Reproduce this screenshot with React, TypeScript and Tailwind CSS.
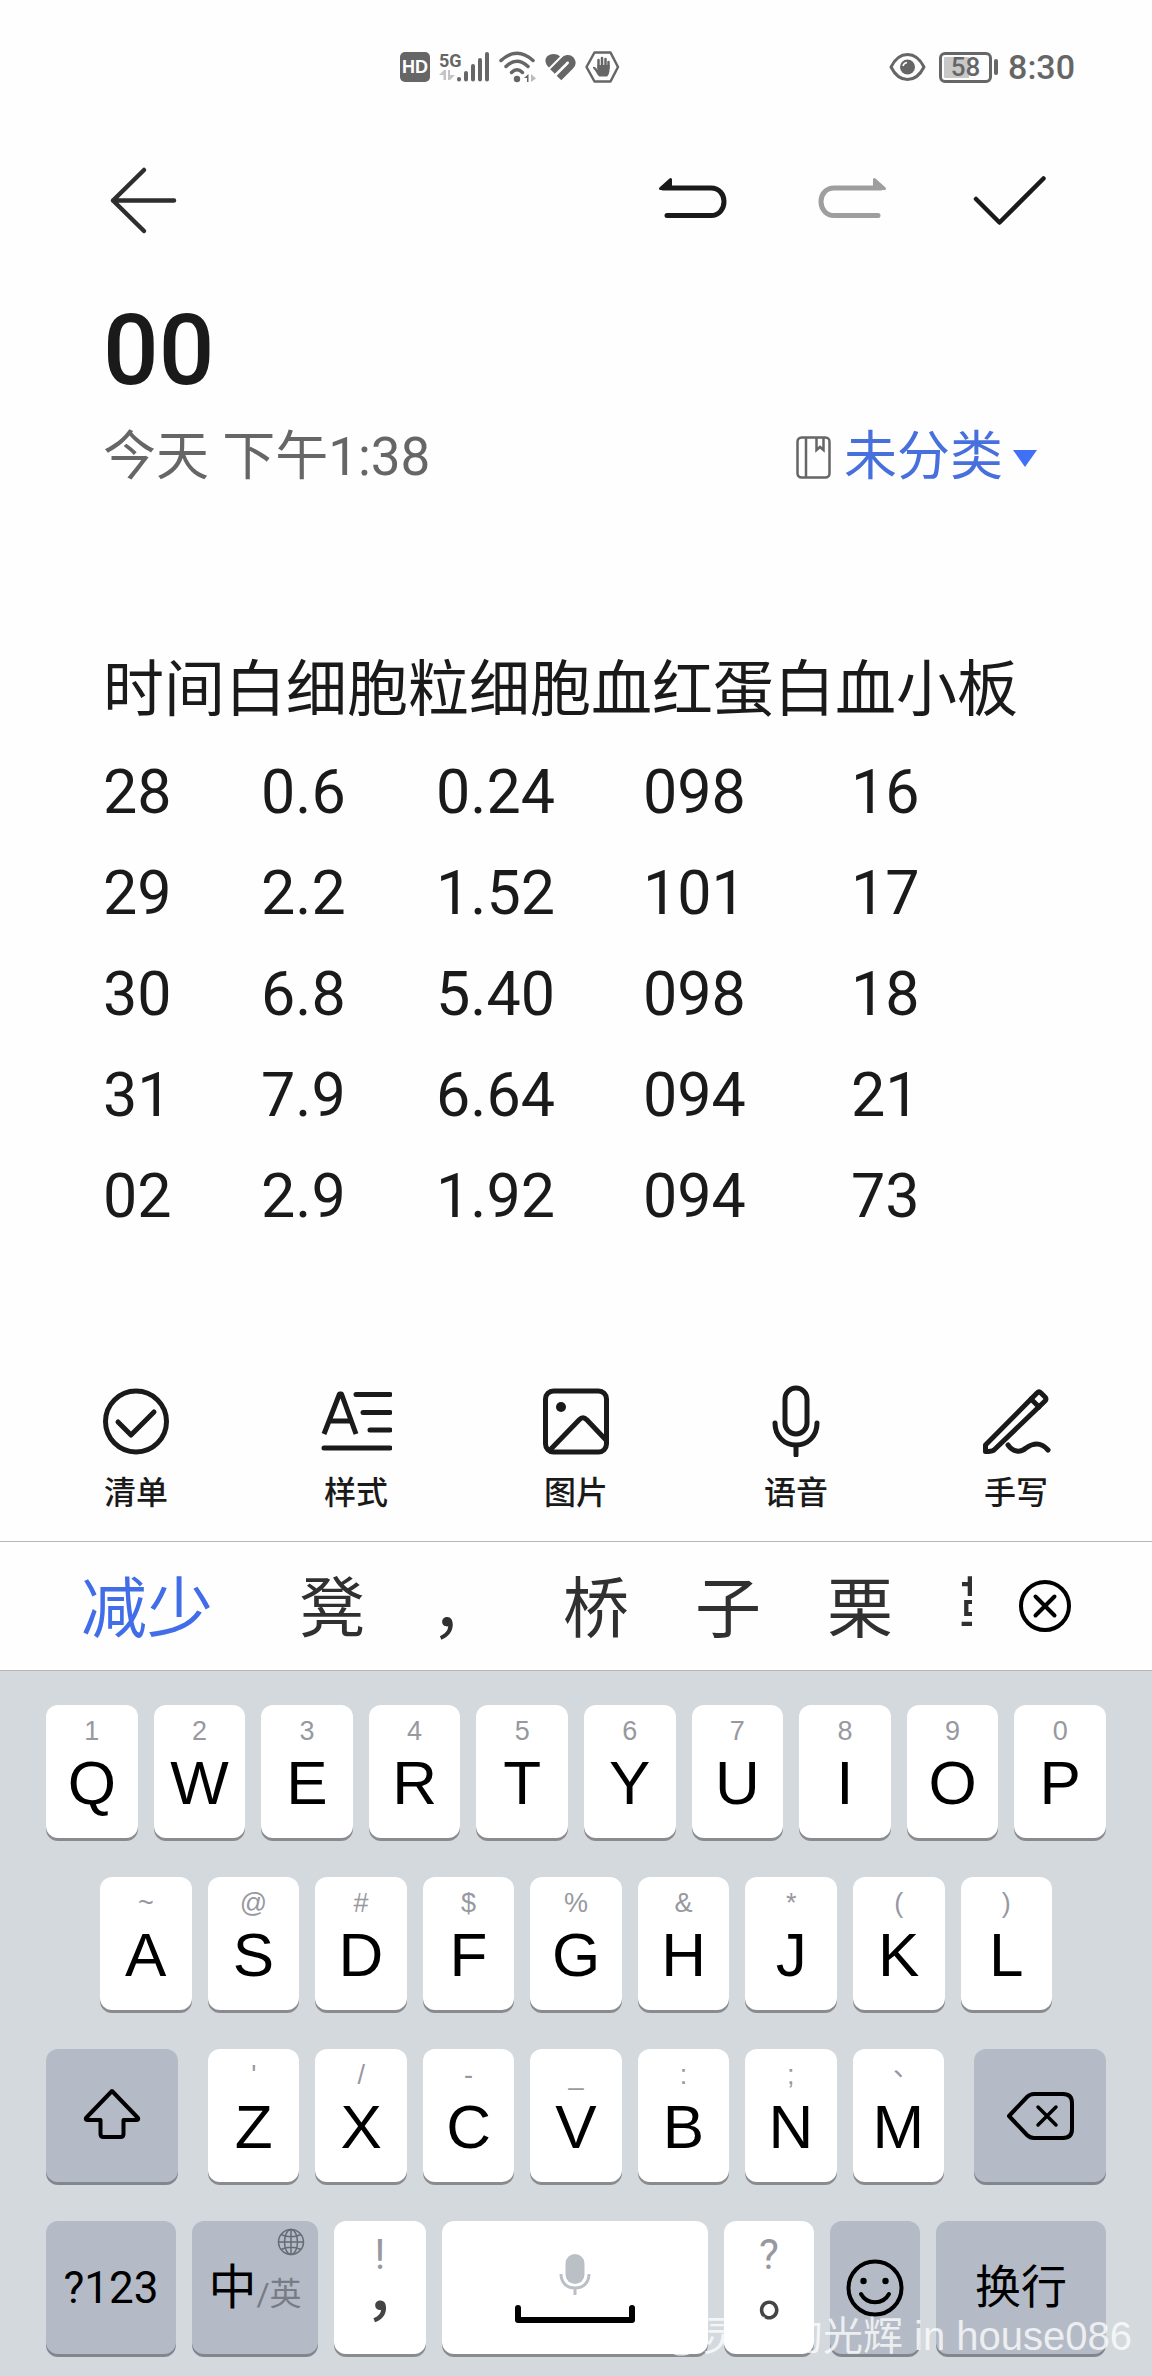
import type { ReactNode } from 'react';
import { useState } from 'react';

const columns = [
    { name: '时间', cell: '' },
    { name: '白细胞', cell: 'pl-9' },
    { name: '粒细胞', cell: 'pl-7' },
    { name: '血红蛋白', cell: 'pl-13' },
    { name: '血小板', cell: 'pl-4' },
];

const records = [
    ['28', '0.6', '0.24', '098', '16'],
    ['29', '2.2', '1.52', '101', '17'],
    ['30', '6.8', '5.40', '098', '18'],
    ['31', '7.9', '6.64', '094', '21'],
    ['02', '2.9', '1.92', '094', '73'],
];

const candidates = ['凳', '，', '桥', '子', '栗', '鞋'];

const row1 = [['Q', '1'], ['W', '2'], ['E', '3'], ['R', '4'], ['T', '5'], ['Y', '6'], ['U', '7'], ['I', '8'], ['O', '9'], ['P', '0']];
const row2 = [['A', '~'], ['S', '@'], ['D', '#'], ['F', '$'], ['G', '%'], ['H', '&'], ['J', '*'], ['K', '('], ['L', ')']];
const row3 = [['Z', "'"], ['X', '/'], ['C', '-'], ['V', '_'], ['B', ':'], ['N', ';'], ['M', '、']];

function StatusBar() {
    return (
        <header className="flex h-[134px] items-center justify-between pr-[77px] pl-[400px] text-[#666]">
            <div className="flex items-center gap-[9px]">
                <span className="flex size-[30px] items-center justify-center rounded-[5px] bg-[#666] font-['Liberation_Sans',sans-serif] text-[18px] font-bold text-white">
                    HD
                </span>
                <div className="flex items-end">
                    <div className="flex w-[18px] flex-col">
                        <span className="font-['Liberation_Sans_Narrow',Roboto,sans-serif] text-[18px] leading-[16px] font-bold">5G</span>
                        <svg width="16" height="14" viewBox="0 0 16 14" fill="#c4c4c4">
                            <path d="M0 6L5 1H7V11H4.500V6ZM9 1H11V6H16L11 11H9Z" />
                        </svg>
                    </div>
                    <svg width="33" height="32" viewBox="0 0 33 32" stroke="currentColor" strokeWidth="4" strokeLinecap="round">
                        <path d="M2 28V28.500M9 22V28.500M16 15V28.500M23 9V28.500M30 3V28.500" />
                    </svg>
                </div>
                <svg width="37" height="32" viewBox="0 0 37 32" fill="none" stroke="currentColor" strokeWidth="3.500" strokeLinecap="round">
                    <path d="M2 9.500Q18 -5 34 9.500" />
                    <path d="M7 15.500Q18 5 29 15.500" />
                    <path d="M12.500 21.500Q18 16 23.500 21.500" />
                    <circle cx="18" cy="28" r="3.200" fill="currentColor" stroke="none" />
                    <path d="M25 27L29.500 23V31H28V27Z" fill="currentColor" stroke="none" />
                    <path d="M32 23L37 27.500L32 31Z" fill="#bbb" stroke="none" />
                </svg>
                <svg width="31" height="28" viewBox="0 0 31 28" fill="none" stroke="currentColor">
                    <path d="M4 14.500C0 11 -0.500 6.500 2 3.500C5 0.500 11 0 15 3.500Z" fill="currentColor" stroke="none" />
                    <path d="M7.500 18.500L18.500 7.500C20.500 5 24 4.500 26 6.500C28 9 27.500 11.500 25.500 13.500L14 25" strokeWidth="6.500" />
                </svg>
                <svg width="35" height="32" viewBox="0 0 35 32" fill="none" stroke="currentColor">
                    <path d="M9.500 1.500H25.500L33 16L25.500 30.500H9.500L1.500 16Z" strokeWidth="2.500" strokeLinejoin="round" />
                    <path d="M13.500 17V9M17 16V7M20.500 16V8M23.500 17V11" strokeWidth="2.500" strokeLinecap="round" />
                    <path d="M8 16C10 15 12 18 12.500 19V14H24.500V20C24 23 23 25 22 25.500H14.500C12 24 11 20 8 17Z" fill="currentColor" stroke="none" />
                </svg>
            </div>
            <div className="flex items-center">
                <svg width="37" height="30" viewBox="0 0 37 30" fill="none" stroke="currentColor" strokeWidth="3">
                    <path d="M2 15C6 7 12 2.500 18.500 2.500S31 7 35 15C31 23 25 27.500 18.500 27.500S6 23 2 15Z" strokeLinejoin="round" />
                    <circle cx="18.500" cy="15" r="7.500" fill="currentColor" stroke="none" />
                    <path d="M14 14C14.500 12 16 10.800 18 10.500" stroke="#fff" strokeWidth="1.500" />
                </svg>
                <span className="ml-[13px] flex h-[31px] w-[53px] items-center justify-center rounded-[6px] border-[3px] border-current bg-linear-to-r from-[#c8c8c8] from-58% to-transparent to-58% bg-clip-content p-[2px] text-[26px] leading-none font-medium">
                    58
                </span>
                <span className="ml-0.5 h-4 w-1 rounded-sm bg-[#666]" />
                <time className="ml-2.5 text-[34px] font-medium">8:30</time>
            </div>
        </header>
    );
}

function NoteActions() {
    return (
        <nav className="flex h-[132px] items-center justify-between pr-[104px] pl-[106px] text-[#1a1a1a]">
            <button type="button" aria-label="返回">
                <svg width="72" height="72" viewBox="0 0 72 72" fill="none" stroke="#2e2e2e" strokeWidth="4.500" strokeLinecap="round" strokeLinejoin="round">
                    <path d="M38 6L7 36.500L38 67M7 36.500H68" />
                </svg>
            </button>
            <div className="flex items-center gap-[83px]">
                <button type="button" aria-label="撤销">
                    <svg width="76" height="50" viewBox="0 0 76 50" fill="none" stroke="currentColor" strokeWidth="5" strokeLinecap="round">
                        <path d="M9 13H57C65 13 70 19 70 26.500S65 40.500 57 40.500H13" />
                        <path d="M6.500 13.500L16.500 4.500V13.500Z" fill="currentColor" strokeWidth="3" strokeLinejoin="round" />
                    </svg>
                </button>
                <button type="button" aria-label="重做" className="text-[#9e9e9e]" disabled>
                    <svg width="76" height="50" viewBox="0 0 76 50" fill="none" stroke="currentColor" strokeWidth="5" strokeLinecap="round">
                        <path d="M68 13H21C13 13 8 19 8 26.500S13 40.500 21 40.500H65" />
                        <path d="M71.500 13.500L61.500 4.500V13.500Z" fill="currentColor" strokeWidth="3" strokeLinejoin="round" />
                    </svg>
                </button>
                <button type="button" aria-label="完成">
                    <svg width="76" height="56" viewBox="0 0 76 56" fill="none" stroke="currentColor" strokeWidth="4.500" strokeLinecap="round" strokeLinejoin="round">
                        <path d="M4 27L27.500 50.500L71.500 6.500" />
                    </svg>
                </button>
            </div>
        </nav>
    );
}

const tools: { label: string; icon: ReactNode }[] = [
    {
        label: '清单',
        icon: (
            <>
                <circle cx="36" cy="36.500" r="30.500" />
                <path d="M18 37L31 50L54 27" />
            </>
        ),
    },
    {
        label: '样式',
        icon: (
            <>
                <path d="M4 49L19.500 9H21.500L36 49M9 36H31" strokeLinecap="butt" />
                <path d="M36 9.500H70M43 27.500H70M50 45H70M4 63H70" />
            </>
        ),
    },
    {
        label: '图片',
        icon: (
            <>
                <rect x="5.500" y="6" width="61" height="61" rx="8" />
                <circle cx="21" cy="22" r="5" fill="currentColor" stroke="none" />
                <path d="M10 65L39 35C42 32 44 32 47 35L66 55" />
            </>
        ),
    },
    {
        label: '语音',
        icon: (
            <>
                <rect x="25" y="3" width="22" height="46" rx="11" />
                <path d="M15 38C15 51 24 60 36 60S57 51 57 38M36 60V70" />
            </>
        ),
    },
    {
        label: '手写',
        icon: (
            <>
                <path d="M5.500 60L57 8Q59 6 61 8L65 12Q67 14 65 16L14 65Q12 66.500 5.500 66.500Z" />
                <path d="M51 14L59 22" />
                <path d="M28 60C33 67 40 68 46 63C53 58 61 57 68 65" />
            </>
        ),
    },
];

function Key({ label, hint }: { label: string; hint: string }) {
    return (
        <button
            type="button"
            className="flex h-[133px] min-w-0 flex-1 flex-col items-center rounded-xl bg-white pt-2.5 font-['Liberation_Sans','Noto_Sans_CJK_TC',sans-serif] shadow-[0_3px_0_#8a8b8e]"
        >
            <span className="h-8 text-[27px] leading-8 text-[#97999f]">{hint}</span>
            <span className="text-[62px] leading-[72px] text-black">{label}</span>
        </button>
    );
}

function FnKey({ className, label, children }: { className: string; label?: string; children: ReactNode }) {
    return (
        <button
            type="button"
            aria-label={label}
            className={`relative flex h-[133px] min-w-0 items-center justify-center rounded-xl bg-[#b5bbc6] text-black shadow-[0_3px_0_#82868f] ${className}`}
        >
            {children}
        </button>
    );
}

function PunctKey({ label, hint, className }: { label: string; hint: string; className: string }) {
    return (
        <button
            type="button"
            className={`flex h-[133px] min-w-0 flex-col items-center rounded-xl bg-white pt-2.5 shadow-[0_3px_0_#8a8b8e] ${className}`}
        >
            <span className="text-[42px] leading-12 text-[#97999f]">{hint}</span>
            <span className="font-['Noto_Sans_CJK_TC',sans-serif] text-[60px] leading-14 font-medium text-[#444]">{label}</span>
        </button>
    );
}

function Keyboard() {
    return (
        <section aria-label="键盘" className="relative flex flex-col gap-[39px] bg-[#d4d9dd] px-[46px] pt-[34px] pb-[22px]">
            <div className="flex gap-4">
                {row1.map(([label, hint]) => <Key key={label} label={label} hint={hint} />)}
            </div>
            <div className="flex gap-4 px-[54px]">
                {row2.map(([label, hint]) => <Key key={label} label={label} hint={hint} />)}
            </div>
            <div className="flex gap-[30px]">
                <FnKey label="大写" className="w-[132px]">
                    <svg width="60" height="54" viewBox="0 0 60 54" fill="none" stroke="currentColor" strokeWidth="4" strokeLinejoin="round" className="mb-1">
                        <path d="M30 4L56 31Q57 33 54 33H41.500V47Q41.500 50 38.500 50H21.500Q18.500 50 18.500 47V33H6Q3 33 4 31Z" />
                    </svg>
                </FnKey>
                <div className="flex flex-1 gap-4">
                    {row3.map(([label, hint]) => <Key key={label} label={label} hint={hint} />)}
                </div>
                <FnKey label="删除" className="w-[132px]">
                    <svg width="70" height="52" viewBox="0 0 70 52" fill="none" stroke="currentColor" strokeWidth="4" strokeLinecap="round" strokeLinejoin="round">
                        <path d="M4 26L22 7Q25 4 29 4H58Q67 4 67 13V39Q67 48 58 48H29Q25 48 22 45Z" />
                        <path d="M33 17L51 35M51 17L33 35" strokeWidth="3.500" />
                    </svg>
                </FnKey>
            </div>
            <div className="flex gap-4">
                <FnKey className="flex-[130_1_0%] text-[44px]">?123</FnKey>
                <FnKey className="flex-[126_1_0%]">
                    <span className="text-[48px]">中</span>
                    <span className="pt-3 text-[32px] text-[#777c86]">/英</span>
                    <svg width="28" height="28" viewBox="0 0 28 28" fill="none" stroke="#666b75" strokeWidth="1.500" className="absolute top-[7px] right-[13px]">
                        <circle cx="14" cy="14" r="12.500" />
                        <ellipse cx="14" cy="14" rx="6.500" ry="12.500" />
                        <path d="M14 1.500V26.500M1.500 14H26.500M4 6.500Q14 11 24 6.500M4 21.500Q14 17 24 21.500" />
                    </svg>
                </FnKey>
                <PunctKey label="，" hint="!" className="flex-[92_1_0%]" />
                <button
                    type="button"
                    aria-label="空格"
                    className="flex h-[133px] flex-[266_1_0%] flex-col items-center gap-2 rounded-xl bg-white pt-[33px] shadow-[0_3px_0_#8a8b8e]"
                >
                    <svg width="32" height="42" viewBox="0 0 32 42" fill="none" stroke="#bbc0c7" strokeWidth="3">
                        <rect x="6.500" y="0" width="19" height="30" rx="9.500" fill="#bbc0c7" stroke="none" />
                        <path d="M2 20C2 29 8 34 16 34S30 29 30 20M16 34V41" />
                    </svg>
                    <svg width="120" height="20" viewBox="0 0 120 20" fill="none" stroke="#000" strokeWidth="6" strokeLinecap="round" strokeLinejoin="round">
                        <path d="M3 4V16H117V4" />
                    </svg>
                </button>
                <PunctKey label="。" hint="?" className="flex-[90_1_0%]" />
                <FnKey label="表情" className="flex-[90_1_0%]">
                    <svg width="58" height="58" viewBox="0 0 58 58" fill="none" stroke="currentColor" strokeWidth="4" strokeLinecap="round">
                        <circle cx="29" cy="29" r="26.500" />
                        <circle cx="17.500" cy="22" r="3.200" fill="currentColor" stroke="none" />
                        <circle cx="39.500" cy="22" r="3.200" fill="currentColor" stroke="none" />
                        <path d="M15 35C21 46 37 46 43 35" />
                    </svg>
                </FnKey>
                <FnKey className="flex-[170_1_0%] text-[46px]">换行</FnKey>
            </div>
            <p className="pointer-events-none absolute right-5 bottom-2.5 font-['Liberation_Sans','Noto_Sans_CJK_SC',sans-serif] text-[40px] leading-[60px] whitespace-nowrap text-white/75">
                @灵山的光辉 in house086
            </p>
        </section>
    );
}

export default function App() {
    const [title, setTitle] = useState('00');

    return (
        <div className="flex min-h-screen flex-col bg-[#fefefe] font-[Roboto,'Noto_Sans_CJK_SC',sans-serif] text-[#1a1a1a]">
            <StatusBar />
            <NoteActions />

            <main className="flex-1 px-[103px] pt-7">
                <input
                    aria-label="标题"
                    value={title}
                    onChange={(e) => setTitle(e.target.value)}
                    className="block h-28 w-full bg-transparent text-[98px] font-medium outline-none"
                />
                <div className="mt-4 flex h-[72px] items-center justify-between text-[53px] text-[#666]">
                    <time>今天 下午1:38</time>
                    <button type="button" className="flex items-center pr-3">
                        <svg width="36" height="44" viewBox="0 0 36 44" fill="none" stroke="#666" strokeWidth="2.500">
                            <rect x="1.500" y="1.500" width="32" height="40" rx="4" />
                            <path d="M10 2V42M20.500 2V14L24 11L27.500 14V2" />
                        </svg>
                        <span className="ml-3 text-[#4870dc]">未分类</span>
                        <svg width="24" height="17" viewBox="0 0 24 17" className="ml-2.5 fill-[#3f70f6]">
                            <path d="M0 0H24L12 17Z" />
                        </svg>
                    </button>
                </div>

                <table className="mt-[146px] text-left text-[61px] whitespace-nowrap">
                    <thead>
                        <tr className="h-[102px]">
                            {columns.map((col) => (
                                <th key={col.name} className="p-0 font-normal">{col.name}</th>
                            ))}
                        </tr>
                    </thead>
                    <tbody>
                        {records.map((record) => (
                            <tr key={record[0]} className="h-[101px]">
                                {record.map((value, i) => (
                                    <td key={columns[i].name} className={`py-0 ${columns[i].cell}`}>{value}</td>
                                ))}
                            </tr>
                        ))}
                    </tbody>
                </table>
            </main>

            <div className="grid grid-cols-5 px-[26px] pb-[26px]">
                {tools.map((tool) => (
                    <button key={tool.label} type="button" className="flex flex-col items-center gap-3.5">
                        <svg width="72" height="72" viewBox="0 0 72 72" fill="none" stroke="currentColor" strokeWidth="5" strokeLinecap="round" strokeLinejoin="round">
                            {tool.icon}
                        </svg>
                        <span className="text-[32px] leading-11 font-medium">{tool.label}</span>
                    </button>
                ))}
            </div>

            <div className="flex h-[130px] items-center border-y border-[#b4b7ba] pr-[81px] pl-[81px] text-[66px] leading-none text-[#303030]">
                <div className="mr-[47px] flex flex-1 gap-[66px] overflow-hidden pt-5 pb-3 whitespace-nowrap">
                    <button type="button" className="mr-5 shrink-0 text-[#416ee8]">减少</button>
                    {candidates.map((word) => (
                        <button key={word} type="button" className="shrink-0">{word}</button>
                    ))}
                </div>
                <button type="button" aria-label="关闭" className="text-black">
                    <svg width="52" height="52" viewBox="0 0 52 52" fill="none" stroke="currentColor" strokeWidth="4" strokeLinecap="round">
                        <circle cx="26" cy="26" r="24" />
                        <path d="M16.500 16.500L35.500 35.500M35.500 16.500L16.500 35.500" />
                    </svg>
                </button>
            </div>

            <Keyboard />
        </div>
    );
}
